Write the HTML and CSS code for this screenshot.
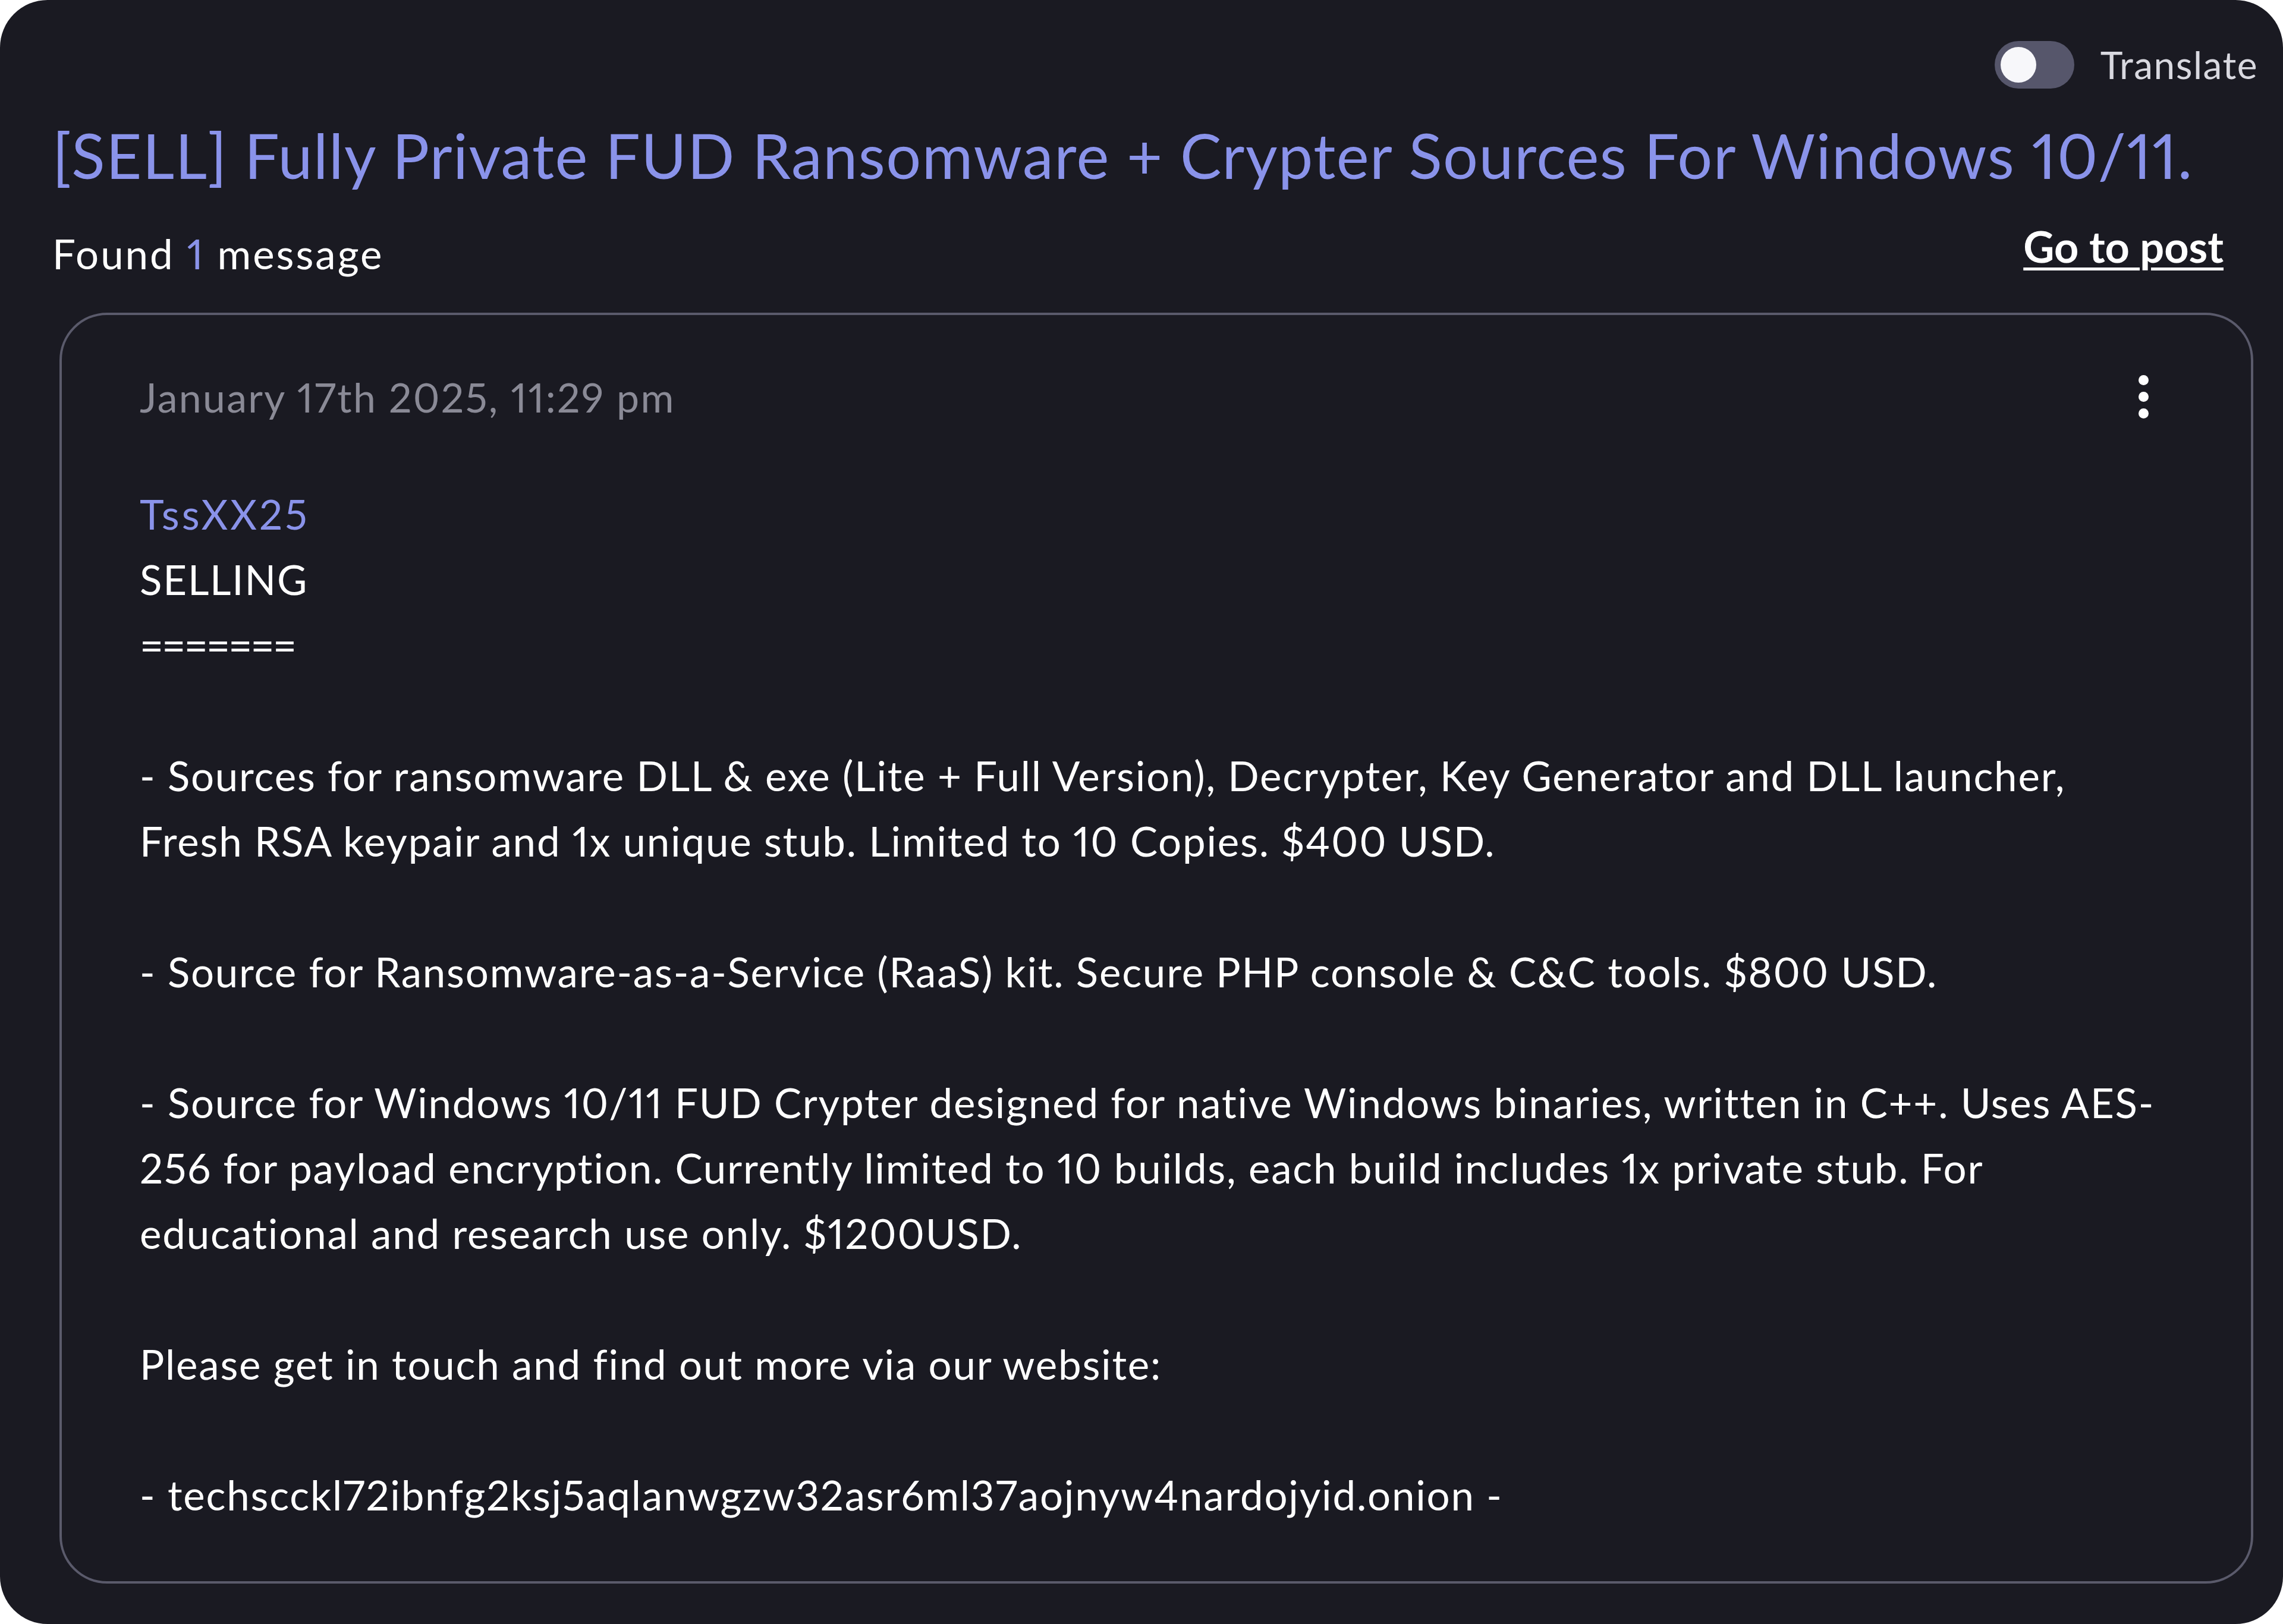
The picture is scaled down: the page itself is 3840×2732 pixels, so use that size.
FILE: index.html
```html
<!DOCTYPE html>
<html lang="en">
<head>
<meta charset="utf-8">
<title>[SELL] Fully Private FUD Ransomware + Crypter Sources</title>
<link rel="stylesheet" href="styles.css">
</head>
<body>
<div class="panel">
  <div class="topbar">
    <div class="toggle"><span class="knob"></span></div>
    <span class="toggle-label">Translate</span>
  </div>
  <h1 class="title">[SELL] Fully Private FUD Ransomware + Crypter Sources For Windows 10/11.</h1>
  <div class="meta">
    <div class="found">Found <span class="count">1</span> message</div>
    <a class="goto" href="#">Go to post</a>
  </div>
  <div class="card">
    <div class="card-head">
      <div class="date">January 17th 2025, 11:29 pm</div>
      <div class="kebab"><span class="dot"></span><span class="dot"></span><span class="dot"></span></div>
    </div>
    <div class="message">
      <div class="author">TssXX25</div>
      <div class="body">SELLING
<span class="rule">=======</span>

- Sources for ransomware DLL &amp; exe (Lite + Full Version), Decrypter, Key Generator and DLL launcher,
Fresh RSA keypair and 1x unique stub. Limited to 10 Copies. $400 USD.

- Source for Ransomware-as-a-Service (RaaS) kit. Secure PHP console &amp; C&amp;C tools. $800 USD.

- Source for Windows 10/11 FUD Crypter designed for native Windows binaries, written in C++. Uses AES-
256 for payload encryption. Currently limited to 10 builds, each build includes 1x private stub. For
educational and research use only. $1200USD.

Please get in touch and find out more via our website:

- techscckl72ibnfg2ksj5aqlanwgzw32asr6ml37aojnyw4nardojyid.onion -</div>
    </div>
  </div>
</div>
</body>
</html>
```

FILE: styles.css
```css
html, body {
  margin: 0;
  padding: 0;
  background: #ffffff;
}

.panel {
  width: 3840px;
  height: 2732px;
  box-sizing: border-box;
  background: #1a1a22;
  border-radius: 80px;
  padding: 69px 50px 0 88px;
  font-family: "Lato", "Noto Sans", sans-serif;
  font-variant-numeric: proportional-nums;
  color: #ffffff;
  overflow: hidden;
}

.topbar {
  display: flex;
  justify-content: flex-end;
  align-items: center;
  gap: 44px;
  height: 80px;
  margin-right: -8px;
}

.toggle {
  width: 134px;
  height: 80px;
  border-radius: 40px;
  background: #56566b;
  display: flex;
  align-items: center;
  padding: 0 10px;
  box-sizing: border-box;
}

.knob {
  width: 60px;
  height: 60px;
  border-radius: 50%;
  background: #f7f7fa;
}

.toggle-label {
  font-size: 64px;
  letter-spacing: 1.5px;
  color: #d9d9e0;
  line-height: 1.2;
}

.title {
  margin: 50px 0 0 0;
  font-size: 104px;
  letter-spacing: 1.5px;
  line-height: 1.2;
  font-weight: 400;
  color: #8a93ea;
}

.meta {
  display: flex;
  justify-content: space-between;
  align-items: flex-start;
  margin-top: 44px;
}

.found {
  font-size: 69px;
  letter-spacing: 3px;
  line-height: 1.2;
  margin-top: 18px;
}

.count {
  color: #8a93ea;
}

.goto {
  font-size: 72px;
  line-height: 1.2;
  font-weight: 700;
  color: #ffffff;
  text-decoration: underline;
  text-decoration-thickness: 5px;
  text-underline-offset: 8px;
  margin-right: 50px;
  margin-top: 3px;
}

.card {
  margin: 57px 0 0 12px;
  border: 4px solid #5a5a6b;
  border-radius: 80px;
  padding: 97px 100px 90px 131px;
}

.card-head {
  display: flex;
  justify-content: space-between;
  align-items: center;
}

.date {
  font-size: 68px;
  letter-spacing: 2.3px;
  line-height: 1.2;
  color: #8a8a96;
}

.kebab {
  display: flex;
  flex-direction: column;
  gap: 11px;
  margin-right: 72px;
}

.dot {
  width: 17px;
  height: 17px;
  border-radius: 50%;
  background: #ffffff;
}

.message {
  margin-top: 102px;
  font-size: 69px;
  letter-spacing: 1.8px;
  line-height: 110px;
}

.author {
  color: #8a93ea;
  letter-spacing: 4px;
}

.body {
  white-space: pre-line;
  color: #ffffff;
}

.rule {
  letter-spacing: -2.7px;
}
```
